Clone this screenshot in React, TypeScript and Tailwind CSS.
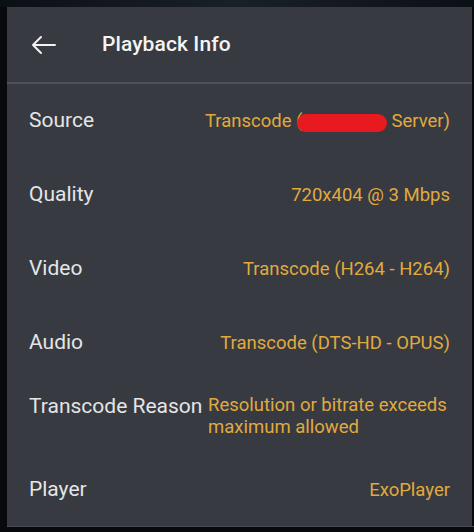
import React from "react";

const rows: { label: string; value: string }[] = [
  { label: "Source", value: "" },
  { label: "Quality", value: "720x404 @ 3 Mbps" },
  { label: "Video", value: "Transcode (H264 - H264)" },
  { label: "Audio", value: "Transcode (DTS-HD - OPUS)" },
];

export default function App() {
  return (
    <div
      className="w-[474px] h-[532px] bg-[#07090c] overflow-hidden relative"
      style={{ fontFamily: "Roboto, 'Noto Sans', sans-serif" }}
    >
      <div className="h-[7px] bg-gradient-to-r from-[#0b1016] via-[#1a2027] to-[#0b1016]" />
      <div className="ml-[7px] w-[465px] h-[519px] bg-[#373a41] overflow-hidden">
        <div className="h-[77px] flex items-center border-b-2 border-[#4d5158]">
          <svg
            className="ml-[24px]"
            width="26"
            height="20"
            viewBox="0 0 26 20"
            fill="none"
            stroke="#f2f2f2"
            strokeWidth="2"
            strokeLinecap="round"
            strokeLinejoin="round"
          >
            <path d="M24 10H2M10 2L2 10L10 18" />
          </svg>
          <span className="ml-[45px] mt-[1px] text-[21px] font-medium text-[#f4f4f4] tracking-[0.1px]">
            Playback Info
          </span>
        </div>
        <div className="px-[22px]">
          {rows.map((r) => (
            <div key={r.label} className="h-[74px] flex items-center justify-between">
              <span className="text-[21px] text-[#e4e5e7]">{r.label}</span>
              {r.label === "Source" ? (
                <span className="text-[18.5px] text-[#e0aa3e] mt-[2px] whitespace-nowrap flex items-center">
                  <span>Transcode (</span>
                  <span className="inline-block w-[90px] h-[18px] rounded-full bg-[#e8191f] -ml-[5px] mt-[2px]" />
                  <span className="ml-[4px]">Server)</span>
                </span>
              ) : (
                <span className="text-[18.5px] text-[#e0aa3e] mt-[2px]">{r.value}</span>
              )}
            </div>
          ))}
          <div className="h-[75px] flex items-start justify-between pt-[13px]">
            <span className="text-[21px] text-[#e4e5e7] leading-[26px] whitespace-nowrap">
              Transcode Reason
            </span>
            <span className="text-[18.5px] text-[#e0aa3e] leading-[21.5px] w-[242px] mt-[2px]">
              Resolution or bitrate exceeds maximum allowed
            </span>
          </div>
          <div className="h-[70px] flex items-center justify-between">
            <span className="text-[21px] text-[#e4e5e7]">Player</span>
            <span className="text-[18.5px] text-[#e0aa3e] mt-[2px]">ExoPlayer</span>
          </div>
        </div>
      </div>
      <div className="ml-[7px] h-[1px] bg-[#4a4d54]" />
    </div>
  );
}
